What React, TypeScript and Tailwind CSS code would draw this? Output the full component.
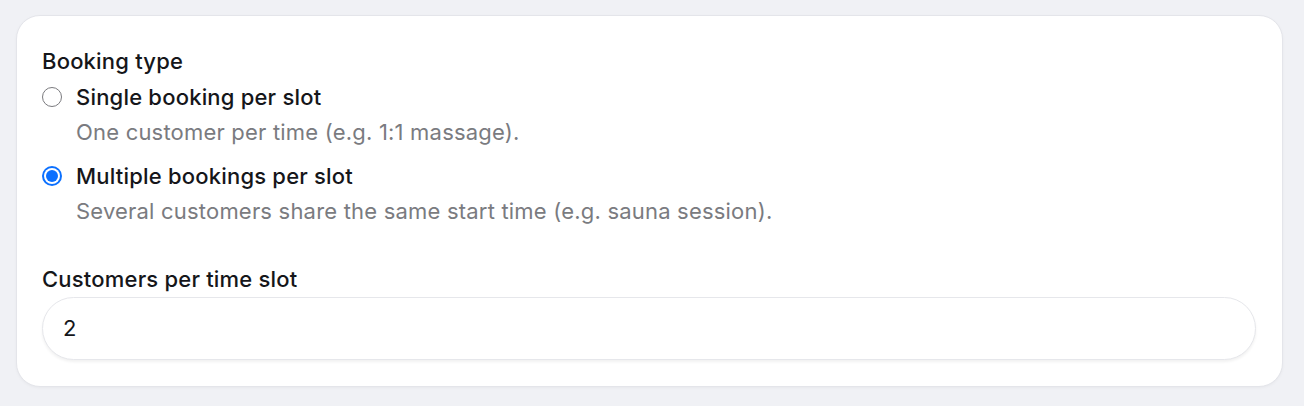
const Radio = ({ checked }: { checked: boolean }) =>
  checked ? (
    <span className="flex h-5 w-5 shrink-0 items-center justify-center rounded-full bg-[#0b70ff]">
      <span className="flex h-4 w-4 items-center justify-center rounded-full bg-white">
        <span className="h-3 w-3 rounded-full bg-[#0b70ff]" />
      </span>
    </span>
  ) : (
    <span className="h-5 w-5 shrink-0 rounded-full border-[1.5px] border-[#7a7a7e] bg-white" />
  );

const App = () => {
  const options = [
    {
      title: "Single booking per slot",
      hint: "One customer per time (e.g. 1:1 massage).",
      checked: false,
    },
    {
      title: "Multiple bookings per slot",
      hint: "Several customers share the same start time (e.g. sauna session).",
      checked: true,
    },
  ];

  return (
    <div className="min-h-[406px] w-full bg-[#f0f1f5] px-4 pt-[15px] font-['Inter',sans-serif] text-[22px] tracking-[0.2px] text-[#15161a]">
      <div className="w-[1267px] rounded-[24px] border border-[#e4e5ea] bg-white px-[25px] pb-[26px] pt-[31px] shadow-[0_1px_3px_rgba(0,0,0,0.04)]">
        <div className="font-[450] leading-[28px]">Booking type</div>

        <div className="mt-2 flex flex-col gap-4">
          {options.map((o) => (
            <div key={o.title}>
              <label className="flex items-center gap-[14px] font-[450] leading-[28px]">
                <Radio checked={o.checked} />
                <span>{o.title}</span>
              </label>
              <p className="mt-[7px] pl-[34px] leading-[28px] text-[#7a7b80]">{o.hint}</p>
            </div>
          ))}
        </div>

        <div className="mt-10 font-[450] leading-[28px]">Customers per time slot</div>
        <div className="mt-1 flex h-[63px] w-[1214px] items-center rounded-full border border-[#e6e7eb] bg-white px-5 shadow-[0_2px_3px_rgba(0,0,0,0.06)]">
          2
        </div>
      </div>
    </div>
  );
};

export default App;
